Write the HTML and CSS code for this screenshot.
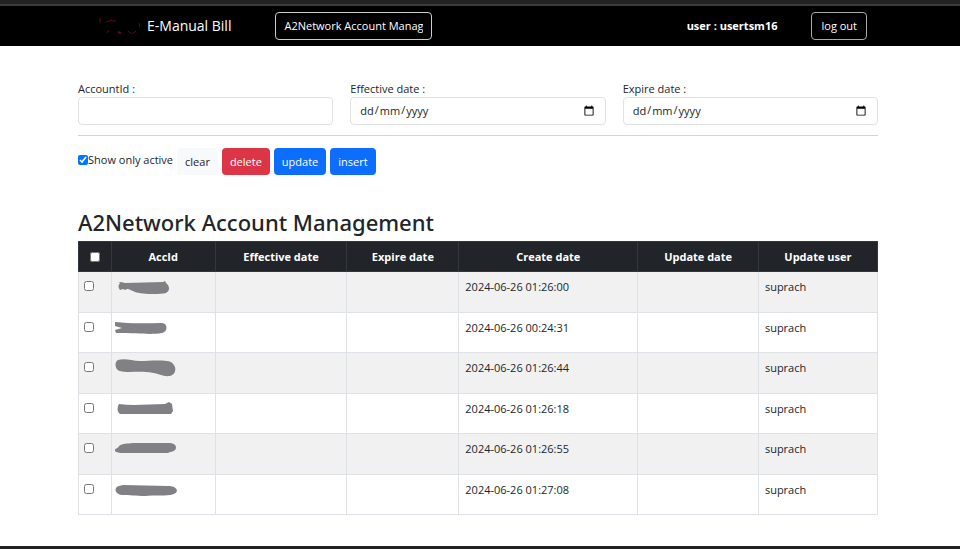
FILE: index.html
```html
<!DOCTYPE html>
<html lang="en-GB">
<head>
  <meta charset="UTF-8" />
  <meta name="viewport" content="width=device-width, initial-scale=1.0"/>
  <title>E-Manual Bill</title>
  <link rel="stylesheet" href="styles.css">
</head>
<body>
  <header class="navbar">
    <svg class="logo" width="44" height="20" viewBox="0 0 44 20" fill="none" stroke="#5c0d18" stroke-width="1">
      <path d="M2 2v5M8 6l6-2M14 5h4M9 17l2-3M30 15c2 3 5 3 8 0M41 7c1 1 1 3 0 4"/>
      <path d="M20 16l3 1" stroke-width="2"/>
    </svg>
    <span class="brand">E-Manual Bill</span>
    <select class="menu" aria-label="Menu">
      <option>A2Network Account Management</option>
    </select>
    <span class="user">user : usertsm16</span>
    <button class="logout">log out</button>
  </header>

  <main>
    <form class="filters">
      <div class="field">
        <label for="accountId">AccountId :</label>
        <input type="text" id="accountId" />
      </div>
      <div class="field">
        <label for="effectiveDate">Effective date :</label>
        <input type="date" id="effectiveDate" />
      </div>
      <div class="field">
        <label for="expireDate">Expire date :</label>
        <input type="date" id="expireDate" />
      </div>
    </form>

    <div class="actions">
      <label class="active-only"><input type="checkbox" checked />Show only active</label>
      <button class="btn light">clear</button>
      <button class="btn danger">delete</button>
      <button class="btn primary">update</button>
      <button class="btn primary">insert</button>
    </div>

    <h1>A2Network Account Management</h1>

    <table>
      <colgroup>
        <col class="col-check"><col class="col-acc"><col class="col-effective"><col class="col-expire">
        <col class="col-create"><col class="col-update"><col class="col-user">
      </colgroup>
      <thead>
        <tr>
          <th><input type="checkbox" aria-label="Select all" /></th>
          <th>AccId</th>
          <th>Effective date</th>
          <th>Expire date</th>
          <th>Create date</th>
          <th>Update date</th>
          <th>Update user</th>
        </tr>
      </thead>
      <tbody>
        <tr>
          <td><input type="checkbox" aria-label="Select row 1" /></td>
          <td class="acc"><svg width="64" height="18" viewBox="0 0 64 18"><path d="M3 5l3-1 4 1 38-1 2-1 1 2c4 3 4 8 0 10-8 2-25 1-31-1-3-1-5-3-8-3l-2 1-2-1-3 1c-2-2-2-5 0-7z"/></svg></td>
          <td></td><td></td><td>2024-06-26 01:26:00</td><td></td><td>suprach</td>
        </tr>
        <tr>
          <td><input type="checkbox" aria-label="Select row 2" /></td>
          <td class="acc"><svg width="64" height="18" viewBox="0 0 64 18"><path d="M0 3c17 2 32 1 47 1 6 0 6 9 0 10-12 2-23 0-46 0l-1-3 7-2-7-2z"/></svg></td>
          <td></td><td></td><td>2024-06-26 00:24:31</td><td></td><td>suprach</td>
        </tr>
        <tr>
          <td><input type="checkbox" aria-label="Select row 3" /></td>
          <td class="acc"><svg width="64" height="18" viewBox="0 0 64 18"><path d="M3 1c7-2 14 1 22 1s17-1 27 0c10 1 11 13 3 15-8 1-14-4-24-4-9-1-19 1-26-1-5-1-6-9-2-11z"/></svg></td>
          <td></td><td></td><td>2024-06-26 01:26:44</td><td></td><td>suprach</td>
        </tr>
        <tr>
          <td><input type="checkbox" aria-label="Select row 4" /></td>
          <td class="acc"><svg width="64" height="18" viewBox="0 0 64 18"><path d="M4 4c15 2 30 0 46 0l4-2 3 2 1 7-2 3H5c-3-2-3-7-1-10z"/></svg></td>
          <td></td><td></td><td>2024-06-26 01:26:18</td><td></td><td>suprach</td>
        </tr>
        <tr>
          <td><input type="checkbox" aria-label="Select row 5" /></td>
          <td class="acc"><svg width="64" height="18" viewBox="0 0 64 18"><path d="M4 6c4-3 8-2 14-3h37c8 0 8 9 0 9l-2 1H5c-2-1-5 0-5-3 0-2 3-1 4-4z"/></svg></td>
          <td></td><td></td><td>2024-06-26 01:26:55</td><td></td><td>suprach</td>
        </tr>
        <tr>
          <td><input type="checkbox" aria-label="Select row 6" /></td>
          <td class="acc"><svg width="64" height="18" viewBox="0 0 64 18"><path d="M4 5l4-1 45 1c11 0 12 8 2 9-8 1-15 0-25 1-9 0-15-1-23-1-8-1-8-8-3-9z"/></svg></td>
          <td></td><td></td><td>2024-06-26 01:27:08</td><td></td><td>suprach</td>
        </tr>
      </tbody>
    </table>
  </main>
</body>
</html>
```
FILE: styles.css
```css
* { box-sizing: border-box; }
body {
  display: flex;
  flex-direction: column;
  min-height: 100vh;
  margin: 0;
  border-top: 4px solid #222;
  border-bottom: 3px solid #222;
  font-family: "Open Sans", sans-serif;
  font-size: 11px;
  line-height: 18px;
  color: #212529;
}
input, select, button { font: inherit; color: inherit; }

.navbar {
  display: flex;
  align-items: center;
  padding: 6px 93px 6px 98px;
  border-top: 2px solid #3b3b3b;
  background: #000;
  color: #fff;
}
.brand { margin-left: 5px; font-size: 14px; }
.menu {
  appearance: none;
  width: 157px;
  height: 28px;
  margin-left: 44px;
  padding: 0 8px;
  border: 1px solid #ccc;
  border-radius: 4px;
  background: #000;
  text-overflow: clip;
}
.user { margin-left: auto; font-weight: bold; }
.logout {
  height: 28px;
  margin-left: 34px;
  padding: 0 9px;
  border: 1px solid #aaa;
  border-radius: 4px;
  background: #000;
}

main { flex: 1; padding: 34px 82px 30px 78px; }
.filters {
  display: grid;
  grid-template-columns: repeat(3, 1fr);
  gap: 17px;
  padding-bottom: 10px;
  border-bottom: 1px solid #d3d4d5;
}
.field label { display: block; height: 17px; }
.field input {
  display: block;
  width: 100%;
  height: 28px;
  padding: 0 8px;
  border: 1px solid #dee2e6;
  border-radius: 4px;
  background: #fff;
}
input::-webkit-calendar-picker-indicator { width: 12px; height: 12px; margin-right: 2px; padding: 0; }

/* always day / month / year, whatever the browser locale */
input::-webkit-datetime-edit-fields-wrapper { display: inline-grid; grid-auto-flow: column; }
input::-webkit-datetime-edit-text { grid-row: 1; }
input::-webkit-datetime-edit-day-field { grid-area: 1 / 1; }
input::-webkit-datetime-edit-month-field { grid-area: 1 / 3; }
input::-webkit-datetime-edit-year-field { grid-area: 1 / 5; }

.actions { display: flex; gap: 4px; margin-top: 12px; }
.active-only { display: flex; align-items: center; height: 24px; }
input[type="checkbox"] { display: block; width: 10px; height: 10px; margin: 0; }
.btn {
  height: 27px;
  padding: 0 8px;
  border: 0;
  border-radius: 4px;
  color: #fff;
}
.light { background: #f8f9fa; color: #212529; }
.danger { background: #dc3545; }
.primary { background: #0d6efd; }

h1 { margin: 32px 0 4px; font-family: "Noto Sans", sans-serif; font-size: 22px; font-weight: 500; line-height: 30px; }

table { width: 100%; height: 274px; table-layout: fixed; border-collapse: collapse; }
.col-check { width: 4.1%; }
.col-acc { width: 13%; }
.col-effective { width: 16.5%; }
.col-expire { width: 14%; }
.col-create { width: 22.4%; }
.col-update { width: 15.1%; }
.col-user { width: 14.9%; }
th { height: 30px; padding: 0; border: 1px solid #32383e; background: #212529; color: #fff; }
th input[type="checkbox"] { margin: 0 auto; }
td { padding: 6px; border: 1px solid #dee2e6; vertical-align: top; }
td input[type="checkbox"] { margin-top: 3px; }
td:first-child { padding-left: 5px; }
tbody tr:nth-child(odd) { background: #f1f1f1; }
.acc { padding: 6px 3px; }
.acc svg { display: block; fill: #808085; }
```
